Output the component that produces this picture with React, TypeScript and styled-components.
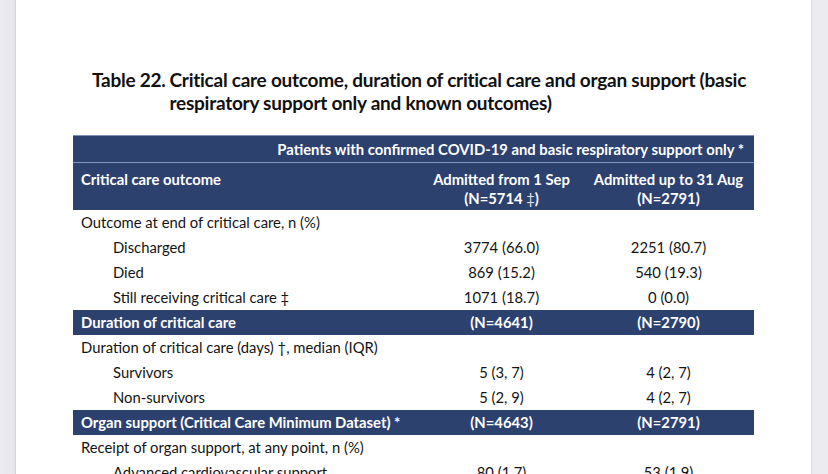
import React from "react";
import styled, { createGlobalStyle } from "styled-components";

const GlobalStyle = createGlobalStyle`
  body {
    margin: 0;
    background: #ebebf0;
    font-family: Lato, "Open Sans", sans-serif;
    color: #141414;
  }
`;

const Page = styled.div`
  display: flex;
  height: 474px;
  overflow: hidden;
  padding: 0 17px 0 16px;
  background: linear-gradient(90deg, #ececf2 0, #e6e6ec 15px, #ececf0 100%);
`;

const Sheet = styled.div`
  flex: 1;
  background: #fff;
  box-shadow: -1px 0 1px rgba(0, 0, 0, 0.08), 1px 0 1px rgba(0, 0, 0, 0.05);
  padding: 68px 0 0 57px;
`;

const Caption = styled.div`
  display: grid;
  grid-template-columns: auto 1fr;
  column-gap: 4px;
  margin: 0 0 21px 19px;
  font-weight: 700;
  font-size: 19px;
  line-height: 23px;
  letter-spacing: -0.25px;
  color: #111;
`;

const Table = styled.table`
  width: 681px;
  border-collapse: collapse;
  table-layout: fixed;
  font-size: 14.8px;
`;

const Band = styled.tr<{ $top?: boolean; $tall?: boolean }>`
  background: #2d416f;
  color: #fff;
  font-weight: 700;
  height: ${(p) => (p.$tall ? "47px" : p.$top ? "27px" : "25px")};
  border-top: ${(p) => (p.$top ? "1px solid #7d8db3" : "none")};
  border-bottom: ${(p) => (p.$top ? "1px solid #8697bd" : "none")};
`;

const Cell = styled.td<{ $indent?: boolean; $top?: boolean }>`
  padding: ${(p) => (p.$top ? "7px" : "0")} 0 0 ${(p) => (p.$indent ? "40px" : "8px")};
  text-align: left;
  vertical-align: ${(p) => (p.$top ? "top" : "middle")};
  line-height: 19px;
  white-space: nowrap;
`;

const Num = styled.td`
  text-align: center;
  vertical-align: middle;
  line-height: 19px;
  white-space: nowrap;
`;

const Row = styled.tr`
  height: 25px;
`;

const TopLabel = styled.td`
  text-align: right;
  padding-right: 10px;
  line-height: 19px;
`;

const HeadNum = styled.td`
  text-align: center;
  vertical-align: top;
  padding-top: 7px;
  line-height: 19px;
`;

const Thin = styled.span`
  font-weight: 400;
  opacity: 0.85;
`;

type Line = { label: string; a?: string; b?: string; indent?: boolean };

const outcome: Line[] = [
  { label: "Outcome at end of critical care, n (%)" },
  { label: "Discharged", a: "3774 (66.0)", b: "2251 (80.7)", indent: true },
  { label: "Died", a: "869 (15.2)", b: "540 (19.3)", indent: true },
  { label: "Still receiving critical care \u2021", a: "1071 (18.7)", b: "0 (0.0)", indent: true },
];

const duration: Line[] = [
  { label: "Duration of critical care (days) \u2020, median (IQR)" },
  { label: "Survivors", a: "5 (3, 7)", b: "4 (2, 7)", indent: true },
  { label: "Non-survivors", a: "5 (2, 9)", b: "4 (2, 7)", indent: true },
];

const organ: Line[] = [
  { label: "Receipt of organ support, at any point, n (%)" },
  { label: "Advanced cardiovascular support", a: "80 (1.7)", b: "53 (1.9)", indent: true },
];

const Lines = ({ rows }: { rows: Line[] }) => (
  <>
    {rows.map((r) => (
      <Row key={r.label}>
        <Cell $indent={r.indent}>{r.label}</Cell>
        <Num>{r.a}</Num>
        <Num>{r.b}</Num>
      </Row>
    ))}
  </>
);

const Section = ({ title, a, b }: { title: string; a: string; b: string }) => (
  <Band>
    <Cell>{title}</Cell>
    <Num>{a}</Num>
    <Num>{b}</Num>
  </Band>
);

export default function App() {
  return (
    <>
      <GlobalStyle />
      <Page>
        <Sheet>
          <Caption>
            <span>Table 22.</span>
            <span>
              Critical care outcome, duration of critical care and organ support (basic
              <br />
              respiratory support only and known outcomes)
            </span>
          </Caption>
          <Table>
            <colgroup>
              <col style={{ width: 347 }} />
              <col style={{ width: 163 }} />
              <col style={{ width: 171 }} />
            </colgroup>
            <tbody>
              <Band $top>
                <TopLabel colSpan={3}>
                  Patients with confirmed COVID-19 and basic respiratory support only *
                </TopLabel>
              </Band>
              <Band $tall>
                <Cell $top>Critical care outcome</Cell>
                <HeadNum>
                  Admitted from 1 Sep
                  <br />
                  (N=5714 <Thin>{"\u2021"}</Thin>)
                </HeadNum>
                <HeadNum>
                  Admitted up to 31 Aug
                  <br />
                  (N=2791)
                </HeadNum>
              </Band>
              <Lines rows={outcome} />
              <Section title="Duration of critical care" a="(N=4641)" b="(N=2790)" />
              <Lines rows={duration} />
              <Section
                title="Organ support (Critical Care Minimum Dataset) *"
                a="(N=4643)"
                b="(N=2791)"
              />
              <Lines rows={organ} />
            </tbody>
          </Table>
        </Sheet>
      </Page>
    </>
  );
}
